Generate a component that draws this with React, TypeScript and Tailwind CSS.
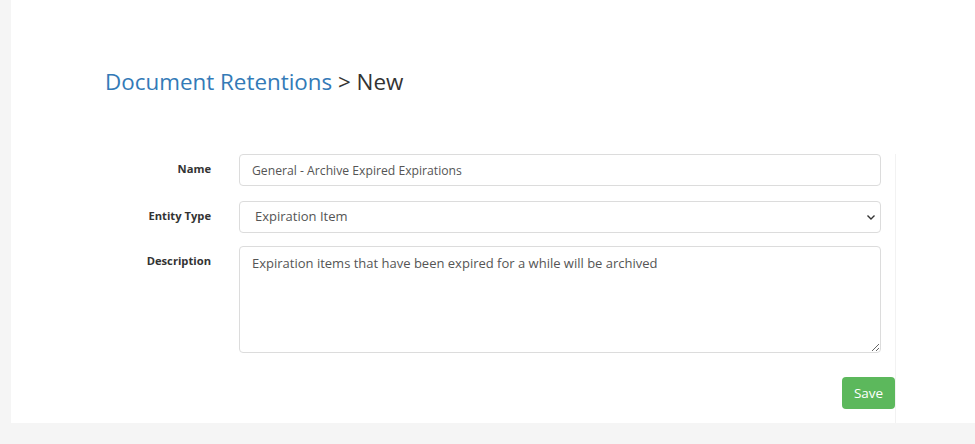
import React, { useState } from "react";

export default function App() {
  const [form, setForm] = useState({
    name: "General - Archive Expired Expirations",
    entityType: "Expiration Item",
    description: "Expiration items that have been expired for a while will be archived",
  });

  const handleChange = (
    e: React.ChangeEvent<HTMLInputElement | HTMLTextAreaElement | HTMLSelectElement>
  ) => {
    setForm({ ...form, [e.target.name]: e.target.value });
  };

  return (
    <div
      className="min-h-[444px] bg-[#f5f5f5] pl-[11px]"
      style={{ fontFamily: '"Open Sans", "Liberation Sans", sans-serif' }}
    >
      <div className="h-[423px] bg-white">
        <h3 className="pl-[94px] pt-[68px] text-[22.4px] leading-[28px] text-[#333]">
          <span className="text-[#337ab7]">Document Retentions</span> &gt; New
        </h3>

        <div className="mt-[58px] w-[885px] h-[269px] border-r border-[#f2f2f2]">
          <form className="flex flex-col">
            <div className="flex">
              <label htmlFor="name" className="w-[228px] pt-[7px] pr-[28px] text-right text-[11.2px] leading-[16px] font-bold text-[#333]">
                Name
              </label>
              <input
                id="name"
                name="name"
                type="text"
                value={form.name}
                onChange={handleChange}
                className="w-[642px] h-[32px] rounded border border-[#dcdcdc] px-[12px] text-[12.2px] text-[#555] outline-none"
              />
            </div>

            <div className="mt-[15px] flex">
              <label htmlFor="entityType" className="w-[228px] pt-[7px] pr-[28px] text-right text-[11.2px] leading-[16px] font-bold text-[#333]">
                Entity Type
              </label>
              <div className="relative w-[642px]">
                <select
                  id="entityType"
                  name="entityType"
                  value={form.entityType}
                  onChange={handleChange}
                  className="w-full h-[32px] appearance-none rounded border border-[#dcdcdc] bg-white pl-[15px] text-[13px] text-[#555] outline-none"
                >
                  <option>Expiration Item</option>
                </select>
                <svg
                  className="pointer-events-none absolute right-[5px] top-[12px]"
                  width="10"
                  height="8"
                  viewBox="0 0 10 8"
                  fill="none"
                >
                  <path d="M1.5 2.5 L5 6 L8.5 2.5" stroke="#333" strokeWidth="1.4" />
                </svg>
              </div>
            </div>

            <div className="mt-[13px] flex">
              <label htmlFor="description" className="w-[228px] pt-[7px] pr-[28px] text-right text-[11.2px] leading-[16px] font-bold text-[#333]">
                Description
              </label>
              <textarea
                id="description"
                name="description"
                value={form.description}
                onChange={handleChange}
                className="w-[642px] h-[107px] rounded border border-[#dcdcdc] px-[12px] py-[6px] text-[13px] leading-[20px] text-[#555] outline-none"
              />
            </div>

            <div className="mt-[24px] flex justify-end">
              <button
                type="button"
                className="h-[32px] w-[53px] rounded bg-[#5cb85c] text-[13.5px] text-white"
              >
                Save
              </button>
            </div>
          </form>
        </div>
      </div>
    </div>
  );
}
